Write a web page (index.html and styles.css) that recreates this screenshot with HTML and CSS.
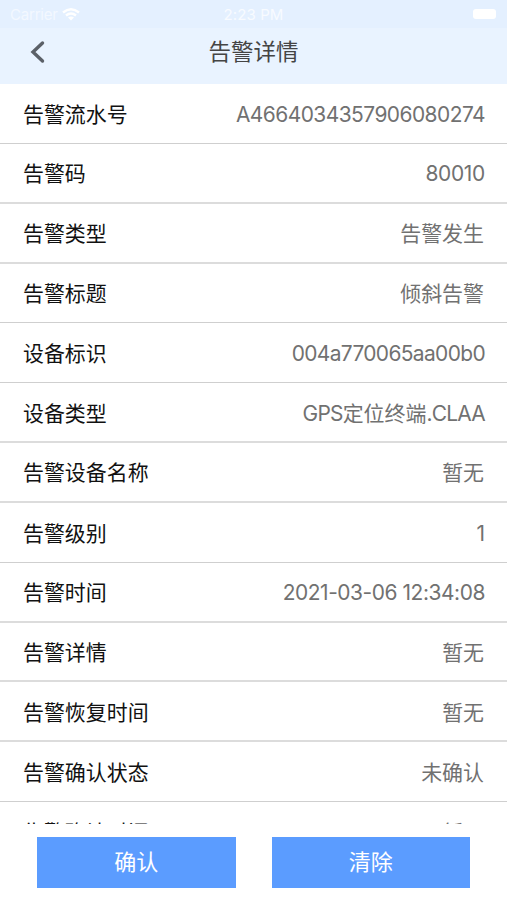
FILE: index.html
```html
<!DOCTYPE html>
<html lang="zh-CN">
<head>
<meta charset="UTF-8">
<title>告警详情</title>
<link rel="stylesheet" href="styles.css">
</head>
<body>
<div class="screen">
  <header class="header">
    <div class="status">
      <div class="carrier"><span>Carrier</span>
        <svg class="wifi" viewBox="0 0 18 13" width="18" height="13"><path d="M1 4.500Q9-2 17 4.500M4 7.500Q9 3.500 14 7.500" fill="none" stroke="#fff" stroke-width="2.400"/><path d="M6 9.500Q9 7.500 12 9.500L9 12.500Z" fill="#fff"/></svg>
      </div>
      <span class="clock">2:23 PM</span>
      <div class="battery"></div>
    </div>
    <div class="nav">
      <svg class="back" viewBox="0 0 16 24" width="16" height="24"><path d="M13.500 3L4 12L13.500 21" fill="none" stroke="#5b6068" stroke-width="3.400" stroke-linecap="round"/></svg>
      <h1>告警详情</h1>
    </div>
  </header>
  <main class="list">
    <div class="row thin"><span>告警流水号</span><b class="code">A4664034357906080274</b></div>
    <div class="row"><span>告警码</span><b class="number">80010</b></div>
    <div class="row"><span>告警类型</span><b class="text">告警发生</b></div>
    <div class="row thin"><span>告警标题</span><b class="text">倾斜告警</b></div>
    <div class="row thin"><span>设备标识</span><b class="device">004a770065aa00b0</b></div>
    <div class="row"><span>设备类型</span><b><i class="model">GPS</i>定位终端<i class="model">.CLAA</i></b></div>
    <div class="row"><span>告警设备名称</span><b class="text">暂无</b></div>
    <div class="row thin"><span>告警级别</span><b>1</b></div>
    <div class="row"><span>告警时间</span><b class="date">2021-03-06 12:34:08</b></div>
    <div class="row"><span>告警详情</span><b class="text">暂无</b></div>
    <div class="row"><span>告警恢复时间</span><b class="text">暂无</b></div>
    <div class="row thin"><span>告警确认状态</span><b class="text">未确认</b></div>
    <div class="row"><span>告警确认时间</span><b class="text">暂无</b></div>
  </main>
  <footer class="actions"><button>确认</button><button>清除</button></footer>
</div>
</body>
</html>
```

FILE: styles.css
```css
* { box-sizing: border-box; }
body { margin: 0; background: #fff; font-family: Inter, "Noto Sans CJK SC", sans-serif; }
.screen { width: 507px; height: 900px; display: flex; flex-direction: column; overflow: hidden; }
.header { height: 84px; flex: none; background: #e9f3ff; }
.status { height: 28px; display: grid; grid-template-columns: 1fr auto 1fr; align-items: center; padding: 0 10px; background: #e4f0ff; color: #f8fbff; font-size: 15px; }
.carrier { display: flex; align-items: center; gap: 4px; color: #f3f8ff; letter-spacing: -.2px; }
.clock { letter-spacing: .1px; }
.battery { justify-self: end; width: 23px; height: 10px; margin-right: 1px; background: #fff; border-radius: 3px; }
.nav { height: 48px; display: grid; grid-template-columns: 1fr auto 1fr; align-items: center; }
.back { margin-left: 29px; }
h1 { margin: 0; font-size: 22.5px; line-height: 30px; font-weight: 400; color: #444; }
.list { flex: 1; min-height: 0; overflow: hidden; }
.row { height: 59.85px; border-bottom: 2px solid #dcdcdc; padding: 3px 22px 0 23px; display: flex; align-items: center; justify-content: space-between; font-size: 20.95px; line-height: 30px; color: #111; white-space: nowrap; }
.row.thin { border-bottom: 1px solid #cfcfcf; }
.row b { font-weight: 400; color: #717171; }
.row .text { margin-right: 1px; }
.row i { font-style: normal; }
.code { letter-spacing: -.54px; }
.device { letter-spacing: -.64px; }
.model { letter-spacing: -.76px; }
.number { letter-spacing: -.3px; }
.date { letter-spacing: -.44px; }
.actions { height: 76px; flex: none; display: flex; gap: 36px; padding: 13px 37px 12px; background: #fff; }
button { flex: 1; border: 0; padding: 0 0 5px; background: #5b9cff; color: #fff; font: inherit; font-size: 22px; }
```
